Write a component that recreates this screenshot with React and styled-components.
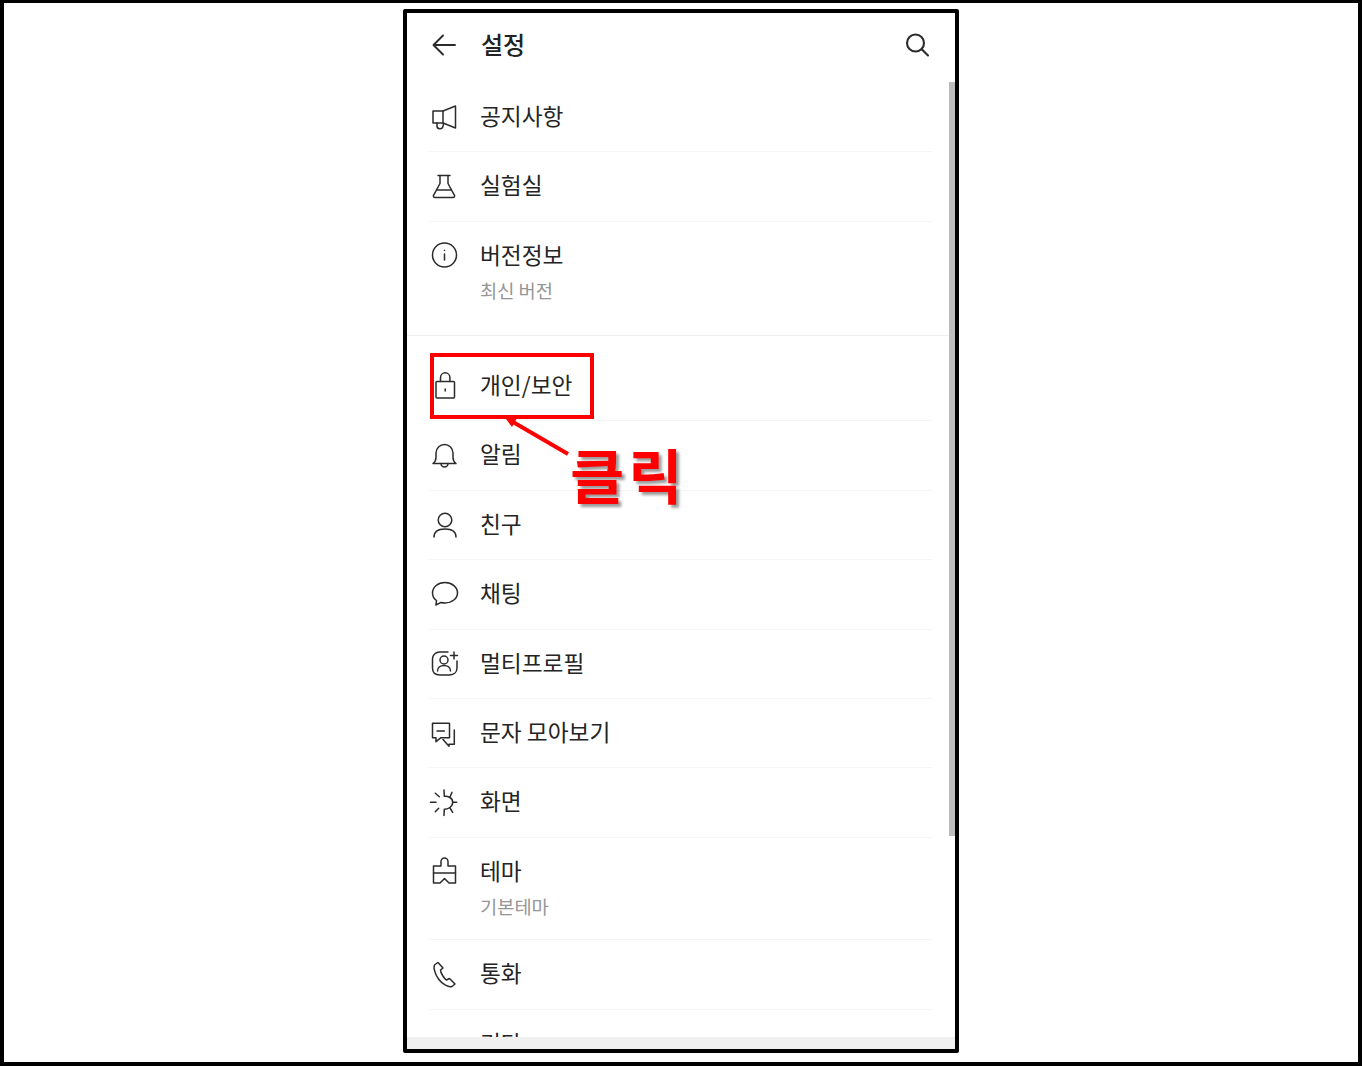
import React from "react";
import styled, { createGlobalStyle } from "styled-components";

const Global = createGlobalStyle`
  html, body { margin: 0; padding: 0; background: #fff; }
  body { font-family: "Noto Sans CJK KR", "Noto Sans", sans-serif; }
`;

const Page = styled.div`
  box-sizing: border-box;
  width: 1362px;
  height: 1066px;
  border: 4px solid #000;
  border-top-width: 3px;
  padding-top: 6px;
  display: flex;
  justify-content: center;
  align-items: flex-start;
  background: #fff;
`;

const Frame = styled.div`
  position: relative;
  box-sizing: border-box;
  width: 556px;
  height: 1044px;
  flex: none;
  border: 4px solid #000;
  border-radius: 2px;
  overflow: hidden;
  background: #fff;
`;

const Header = styled.header`
  box-sizing: border-box;
  height: 70px;
  padding: 0 24px 7px 24px;
  display: flex;
  align-items: center;
  gap: 24px;
`;

const Title = styled.h1`
  flex: 1;
  margin: 0 0 2px;
  font-size: 24px;
  font-weight: 500;
  line-height: 34px;
  color: #222;
`;

const Section = styled.section`
  padding-top: ${(p) => p.$top || 0}px;
  border-bottom: ${(p) => (p.$rule ? "1px solid #efefef" : "none")};
`;

const Row = styled.div`
  box-sizing: border-box;
  margin-left: 21px;
  width: 505px;
  height: ${(p) => p.$height}px;
  padding: 16px 0 0 4px;
  display: flex;
  align-items: flex-start;
  gap: 22px;
  border-bottom: ${(p) => (p.$plain ? "none" : "1px solid #f5f5f5")};
`;

const IconSlot = styled.span`
  flex: none;
  width: 26px;
  height: 26px;
  margin-top: 4.5px;
  display: block;
`;

const Glyph = styled.svg`
  display: block;
  flex: none;
  width: 26px;
  height: 26px;
  overflow: visible;
  fill: none;
  stroke: #2b2b2b;
  stroke-width: ${(p) => p.$weight || 1.5};
  stroke-linecap: round;
  stroke-linejoin: round;
`;

const RowText = styled.div`
  display: flex;
  flex-direction: column;
`;

const Label = styled.span`
  font-size: 22.7px;
  line-height: 34px;
  color: #242424;
  white-space: nowrap;
`;

const Sub = styled.span`
  margin-top: 3px;
  font-size: 18.7px;
  line-height: 30px;
  color: #969696;
  white-space: nowrap;
`;

const Scrollbar = styled.div`
  position: absolute;
  right: 0;
  top: 69px;
  width: 6px;
  height: 754px;
  background: #bcbcbc;
`;

const BottomBar = styled.div`
  position: absolute;
  left: 0;
  right: 0;
  bottom: 0;
  height: 12px;
  background: #f0f0f0;
`;

const Highlight = styled.div`
  position: absolute;
  box-sizing: border-box;
  left: 23px;
  top: 340px;
  width: 164px;
  height: 66px;
  border: 4px solid #f00;
`;

const Pointer = styled.svg`
  position: absolute;
  left: 92px;
  top: 400px;
  width: 80px;
  height: 50px;
`;

const Callout = styled.div`
  position: absolute;
  left: 163px;
  top: 423px;
  font-size: 59px;
  font-weight: 700;
  line-height: 76px;
  letter-spacing: 4px;
  color: #f00;
  text-shadow: 3px 3px 3px rgba(0, 0, 0, 0.4);
  white-space: nowrap;
`;

const Icon = ({ children, weight }) => (
  <Glyph viewBox="0 0 26 26" $weight={weight}>
    {children}
  </Glyph>
);

const icons = {
  notice: (
    <Icon>
      <path d="M1 7h10L23.500 2v22L11 19H1z" />
      <path d="M11 7v12" />
      <path d="M5 19v2.500a3 3 0 0 0 6 .5l.5-2" />
    </Icon>
  ),
  lab: (
    <Icon>
      <path d="M6 2.500h12" />
      <path d="M8 2.500v8L1.800 21.800A1.600 1.600 0 0 0 3.200 24.500h17.600a1.600 1.600 0 0 0 1.400-2.700L16 10.500v-8" />
      <path d="M5 17h14" />
    </Icon>
  ),
  info: (
    <Icon>
      <circle cx="12.500" cy="13" r="12" />
      <path d="M12.500 12v6" />
      <path d="M12.500 8.200v.4" />
    </Icon>
  ),
  lock: (
    <Icon>
      <rect x="4" y="9.500" width="18.500" height="16.500" rx="1" />
      <path d="M8.500 9.500V5.500a4.700 4.700 0 0 1 9.400 0v4" />
      <path d="M13.200 17v2" />
    </Icon>
  ),
  bell: (
    <Icon>
      <path d="M1 21.500c2-1.500 3-3.500 3-6V11a8.500 8.500 0 0 1 17 0v4.500c0 2.500 1 4.500 3 6z" />
      <path d="M9 21.500a3.500 3.500 0 0 0 7 0" />
    </Icon>
  ),
  friend: (
    <Icon>
      <circle cx="13" cy="9" r="6.800" />
      <path d="M2 26c0-5.500 4.500-8 11-8s11 2.500 11 8" />
    </Icon>
  ),
  chat: (
    <Icon>
      <path d="M13 1.500C6 1.500.5 6 .5 12c0 3.200 1.500 5.800 4 7.500l-.6 4.500 5.200-2.600c1.200.3 2.600.5 3.900.5 7 0 12.500-4.400 12.500-10S20 1.500 13 1.500z" />
    </Icon>
  ),
  multi: (
    <Icon>
      <path d="M16 2H8C3.500 2 .5 5 .5 9v9c0 4.500 3 7 7.500 7h9c4.500 0 8-2.500 8-7v-7" />
      <circle cx="12" cy="10" r="4" />
      <path d="M5.500 21c0-3.500 3-5.500 6.500-5.500s6.500 2 6.500 5.500" />
      <path d="M22 2v7M18.500 5.500h7" />
    </Icon>
  ),
  sms: (
    <Icon>
      <path d="M.5 4.300h17v14.400H9l-5 4v-4H.5z" />
      <path d="M5 12h7.300" />
      <path d="M22.300 11v14.300H17v2L11 20.500" />
    </Icon>
  ),
  display: (
    <Icon>
      <path d="M-1.500 13.300h5.500M3.300 4.300l4 3.400M3.300 22.700l3.400-3.400" />
      <path d="M12 1l.3 6.300c3.700-.3 8.400 1.500 8.400 6s-4.700 7-8.400 7L12 26.500" />
      <path d="M20.700 13.300h4M20 3.300l-2 4.700M18 19l2.700 4.300" />
    </Icon>
  ),
  theme: (
    <Icon>
      <path d="M9 8V3.500a3.500 3.500 0 0 1 7 0V8h7.500v17H17l-4.500-4.500L8 25H1.500V8z" />
      <path d="M1.500 15h22" />
    </Icon>
  ),
  call: (
    <Icon>
      <path d="M6 1.500L3 3.500C1 5.500 2.500 12.500 6.500 18c4 5.500 10 8.500 13.500 7.500l3-2.500-5.500-5.500-3 1.500C12.500 18 8.500 12 8.500 9l2.500-2z" />
    </Icon>
  ),
};

const Divider = 69.4;

const firstRows = [
  { icon: "notice", label: "공지사항" },
  { icon: "lab", label: "실험실" },
  { icon: "info", label: "버전정보", sub: "최신 버전", height: 113.2, plain: true },
];

const secondRows = [
  { icon: "lock", label: "개인/보안" },
  { icon: "bell", label: "알림" },
  { icon: "friend", label: "친구" },
  { icon: "chat", label: "채팅" },
  { icon: "multi", label: "멀티프로필" },
  { icon: "sms", label: "문자 모아보기" },
  { icon: "display", label: "화면" },
  { icon: "theme", label: "테마", sub: "기본테마", height: 102.6 },
  { icon: "call", label: "통화" },
  { label: "기타" },
];

const MenuRow = ({ icon, label, sub, height = Divider, plain }) => (
  <Row $height={height} $plain={plain}>
    <IconSlot>{icons[icon]}</IconSlot>
    <RowText>
      <Label>{label}</Label>
      {sub && <Sub>{sub}</Sub>}
    </RowText>
  </Row>
);

export default function App() {
  return (
    <Page>
      <Global />
      <Frame>
        <Header>
          <Icon weight={1.9}>
            <path d="M24 13H3M12 3.500L2.500 13l9.500 9.500" />
          </Icon>
          <Title>설정</Title>
          <Icon weight={2.1}>
            <circle cx="10.500" cy="11" r="8.500" />
            <path d="M17 17.500l6 6" />
          </Icon>
        </Header>
        <Section $rule>
          {firstRows.map((r) => (
            <MenuRow key={r.label} {...r} />
          ))}
        </Section>
        <Section $top={16}>
          {secondRows.map((r) => (
            <MenuRow key={r.label} {...r} />
          ))}
        </Section>
        <Scrollbar />
        <BottomBar />
        <Highlight />
        <Pointer viewBox="0 0 80 50">
          <path d="M69 41L14 9" stroke="#f00" strokeWidth="4" fill="none" />
          <path d="M7 6l11-1-5 9z" fill="#f00" />
        </Pointer>
        <Callout>클릭</Callout>
      </Frame>
    </Page>
  );
}
